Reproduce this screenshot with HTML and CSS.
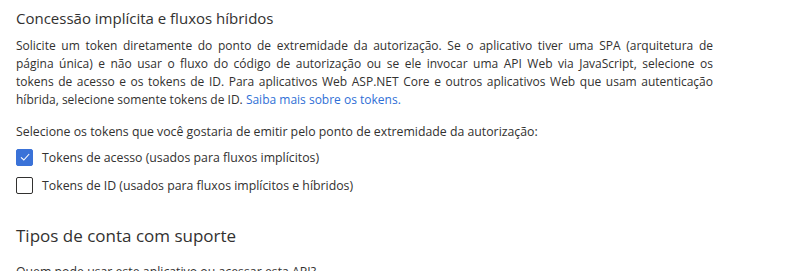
FILE: index.html
```html
<!DOCTYPE html>
<html lang="pt-BR">
<head>
  <meta charset="UTF-8" />
  <title>Autenticação</title>
  <link rel="stylesheet" href="styles.css">
</head>
<body>
  <section class="section">
    <h2 class="section-title">Concessão implícita e fluxos híbridos</h2>
    <p class="description">
      <span class="line">Solicite um token diretamente do ponto de extremidade da autorização. Se o aplicativo tiver uma SPA (arquitetura de</span>
      <span class="line">página única) e não usar o fluxo do código de autorização ou se ele invocar uma API Web via JavaScript, selecione os</span>
      <span class="line">tokens de acesso e os tokens de ID. Para aplicativos Web ASP.NET Core e outros aplicativos Web que usam autenticação</span>
      <span class="line last">híbrida, selecione somente tokens de ID. <a href="#" class="link">Saiba mais sobre os tokens.</a></span>
    </p>
    <p class="prompt">Selecione os tokens que você gostaria de emitir pelo ponto de extremidade da autorização:</p>
    <label class="check-row">
      <span class="checkbox checked">
        <svg width="12" height="12" viewBox="0 0 12 12"><path d="M2 6.3 L4.8 9 L10.2 3" fill="none" stroke="#fff" stroke-width="1.1"/></svg>
      </span>
      Tokens de acesso (usados para fluxos implícitos)
    </label>
    <label class="check-row">
      <span class="checkbox"></span>
      Tokens de ID (usados para fluxos implícitos e híbridos)
    </label>
  </section>

  <section class="section">
    <h2 class="section-title large">Tipos de conta com suporte</h2>
    <p class="prompt">Quem pode usar este aplicativo ou acessar esta API?</p>
  </section>
</body>
</html>
```

FILE: styles.css
```css
body {
  margin: 0;
  padding: 0 16px;
  background: #fff;
  color: #323130;
  font-family: "Open Sans", "Noto Sans", sans-serif;
}
.section-title {
  margin: 7px 0 8px;
  font-size: 15px;
  font-weight: 400;
  line-height: 22px;
}
.section-title.large {
  margin: 27px 0 12px;
  font-size: 17px;
  line-height: 28px;
}
.description {
  width: 697px;
  margin: 0 0 13px;
  font-size: 12px;
  line-height: 18px;
}
.line {
  display: block;
  text-align: justify;
  text-align-last: justify;
}
.line.last {
  text-align-last: left;
}
.link {
  color: #2f6fd6;
  text-decoration: none;
}
.prompt {
  margin: 0 0 5px;
  font-size: 12.3px;
  line-height: 20px;
}
.check-row {
  display: flex;
  align-items: center;
  gap: 9px;
  height: 20px;
  margin-bottom: 8px;
  font-size: 12.3px;
}
.checkbox {
  box-sizing: border-box;
  width: 17px;
  height: 17px;
  border: 1px solid #323130;
  border-radius: 2px;
  display: flex;
  align-items: center;
  justify-content: center;
}
.checkbox.checked {
  background: #3a72d8;
  border-color: #3a72d8;
}
```
